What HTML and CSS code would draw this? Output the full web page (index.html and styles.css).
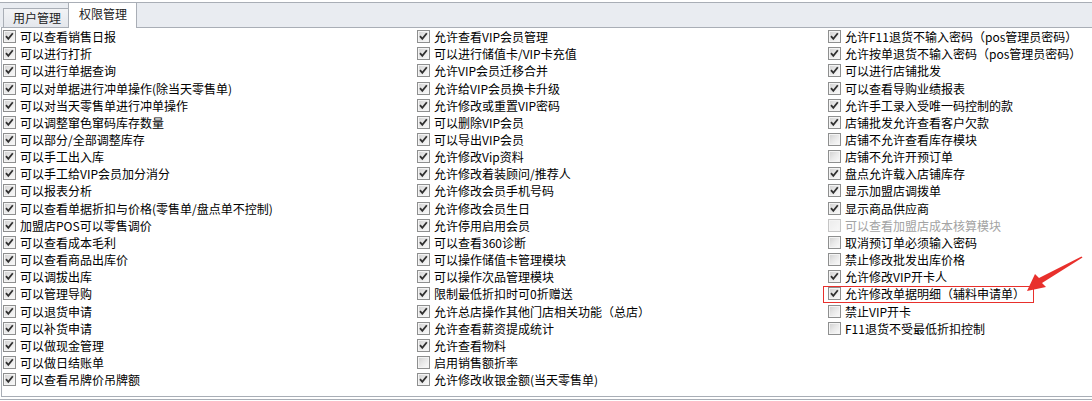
FILE: index.html
```html
<!DOCTYPE html>
<html lang="zh-CN">
<head>
<meta charset="utf-8">
<title>权限管理</title>
<link rel="stylesheet" href="styles.css">
</head>
<body>
<div class="tabstrip">
  <div class="tab">用户管理</div>
  <div class="tab active">权限管理</div>
</div>
<div class="panel">
  <div class="col">
    <div class="row"><span class="cb on"></span><span class="lbl">可以查看销售日报</span></div>
    <div class="row"><span class="cb on"></span><span class="lbl">可以进行打折</span></div>
    <div class="row"><span class="cb on"></span><span class="lbl">可以进行单据查询</span></div>
    <div class="row"><span class="cb on"></span><span class="lbl">可以对单据进行冲单操作(除当天零售单)</span></div>
    <div class="row"><span class="cb on"></span><span class="lbl">可以对当天零售单进行冲单操作</span></div>
    <div class="row"><span class="cb on"></span><span class="lbl">可以调整窜色窜码库存数量</span></div>
    <div class="row"><span class="cb on"></span><span class="lbl">可以部分/全部调整库存</span></div>
    <div class="row"><span class="cb on"></span><span class="lbl">可以手工出入库</span></div>
    <div class="row"><span class="cb on"></span><span class="lbl">可以手工给VIP会员加分消分</span></div>
    <div class="row"><span class="cb on"></span><span class="lbl">可以报表分析</span></div>
    <div class="row"><span class="cb on"></span><span class="lbl">可以查看单据折扣与价格(零售单/盘点单不控制)</span></div>
    <div class="row"><span class="cb on"></span><span class="lbl">加盟店POS可以零售调价</span></div>
    <div class="row"><span class="cb on"></span><span class="lbl">可以查看成本毛利</span></div>
    <div class="row"><span class="cb on"></span><span class="lbl">可以查看商品出库价</span></div>
    <div class="row"><span class="cb on"></span><span class="lbl">可以调拔出库</span></div>
    <div class="row"><span class="cb on"></span><span class="lbl">可以管理导购</span></div>
    <div class="row"><span class="cb on"></span><span class="lbl">可以退货申请</span></div>
    <div class="row"><span class="cb on"></span><span class="lbl">可以补货申请</span></div>
    <div class="row"><span class="cb on"></span><span class="lbl">可以做现金管理</span></div>
    <div class="row"><span class="cb on"></span><span class="lbl">可以做日结账单</span></div>
    <div class="row"><span class="cb on"></span><span class="lbl">可以查看吊牌价吊牌额</span></div>
  </div>
  <div class="col">
    <div class="row"><span class="cb on"></span><span class="lbl">允许查看VIP会员管理</span></div>
    <div class="row"><span class="cb on"></span><span class="lbl">可以进行储值卡/VIP卡充值</span></div>
    <div class="row"><span class="cb on"></span><span class="lbl">允许VIP会员迁移合并</span></div>
    <div class="row"><span class="cb on"></span><span class="lbl">允许给VIP会员换卡升级</span></div>
    <div class="row"><span class="cb on"></span><span class="lbl">允许修改或重置VIP密码</span></div>
    <div class="row"><span class="cb on"></span><span class="lbl">可以删除VIP会员</span></div>
    <div class="row"><span class="cb on"></span><span class="lbl">可以导出VIP会员</span></div>
    <div class="row"><span class="cb on"></span><span class="lbl">允许修改Vip资料</span></div>
    <div class="row"><span class="cb on"></span><span class="lbl">允许修改着装顾问/推荐人</span></div>
    <div class="row"><span class="cb on"></span><span class="lbl">允许修改会员手机号码</span></div>
    <div class="row"><span class="cb on"></span><span class="lbl">允许修改会员生日</span></div>
    <div class="row"><span class="cb on"></span><span class="lbl">允许停用启用会员</span></div>
    <div class="row"><span class="cb on"></span><span class="lbl">可以查看360诊断</span></div>
    <div class="row"><span class="cb on"></span><span class="lbl">可以操作储值卡管理模块</span></div>
    <div class="row"><span class="cb on"></span><span class="lbl">可以操作次品管理模块</span></div>
    <div class="row"><span class="cb on"></span><span class="lbl">限制最低折扣时可0折赠送</span></div>
    <div class="row"><span class="cb on"></span><span class="lbl">允许总店操作其他门店相关功能（总店）</span></div>
    <div class="row"><span class="cb on"></span><span class="lbl">允许查看薪资提成统计</span></div>
    <div class="row"><span class="cb on"></span><span class="lbl">允许查看物料</span></div>
    <div class="row"><span class="cb"></span><span class="lbl">启用销售额折率</span></div>
    <div class="row"><span class="cb on"></span><span class="lbl">允许修改收银金额(当天零售单)</span></div>
  </div>
  <div class="col">
    <div class="row"><span class="cb on"></span><span class="lbl">允许F11退货不输入密码（pos管理员密码）</span></div>
    <div class="row"><span class="cb on"></span><span class="lbl">允许按单退货不输入密码（pos管理员密码）</span></div>
    <div class="row"><span class="cb on"></span><span class="lbl">可以进行店铺批发</span></div>
    <div class="row"><span class="cb on"></span><span class="lbl">可以查看导购业绩报表</span></div>
    <div class="row"><span class="cb on"></span><span class="lbl">允许手工录入受唯一码控制的款</span></div>
    <div class="row"><span class="cb on"></span><span class="lbl">店铺批发允许查看客户欠款</span></div>
    <div class="row"><span class="cb"></span><span class="lbl">店铺不允许查看库存模块</span></div>
    <div class="row"><span class="cb"></span><span class="lbl">店铺不允许开预订单</span></div>
    <div class="row"><span class="cb on"></span><span class="lbl">盘点允许载入店铺库存</span></div>
    <div class="row"><span class="cb on"></span><span class="lbl">显示加盟店调拨单</span></div>
    <div class="row"><span class="cb on"></span><span class="lbl">显示商品供应商</span></div>
    <div class="row disabled"><span class="cb"></span><span class="lbl">可以查看加盟店成本核算模块</span></div>
    <div class="row"><span class="cb"></span><span class="lbl">取消预订单必须输入密码</span></div>
    <div class="row"><span class="cb"></span><span class="lbl">禁止修改批发出库价格</span></div>
    <div class="row"><span class="cb on"></span><span class="lbl">允许修改VIP开卡人</span></div>
    <div class="row"><span class="cb on"></span><span class="lbl">允许修改单据明细（辅料申请单）</span></div>
    <div class="row"><span class="cb"></span><span class="lbl">禁止VIP开卡</span></div>
    <div class="row"><span class="cb"></span><span class="lbl">F11退货不受最低折扣控制</span></div>
  </div>
</div>
<div class="footer"></div>

<div class="mark-box"></div>
<svg class="mark-arrow" width="72" height="50" viewBox="0 0 72 50">
  <polygon points="7,41 26,37 22,33 62.5,7.5 61.5,6.5 19,28 15,24" fill="#e8302c"/>
</svg>
</body>
</html>
```

FILE: styles.css
```css
html, body {
  margin: 0;
  padding: 0;
}
body {
  width: 1092px;
  height: 401px;
  overflow: hidden;
  background: #ffffff;
  position: relative;
  font-family: "Noto Sans CJK SC", "Microsoft YaHei", sans-serif;
  font-size: 12px;
  color: #000;
}

.tabstrip {
  margin-top: 2px;
  height: 24px;
  border-top: 1px solid #a9aeb6;
  background: #e9ecf1;
  display: flex;
  align-items: flex-end;
  padding-left: 3px;
}
.tab {
  box-sizing: border-box;
  height: 19px;
  line-height: 17px;
  padding: 0 7px 0 9px;
  border-left: 1px solid #a9aeb6;
  border-top: 1px solid #a9aeb6;
  background: linear-gradient(#f2f3f5, #e4e7ec);
  color: #222;
}
.tab.active {
  height: 26px;
  margin-bottom: -1px;
  padding: 0 9px 0 10px;
  line-height: 22px;
  border-right: 1px solid #a9aeb6;
  background: #ffffff;
  position: relative;
  z-index: 1;
}

.panel {
  box-sizing: border-box;
  height: 370px;
  margin-left: 1px;
  border-left: 1px solid #a9aeb6;
  border-top: 1px solid #a9aeb6;
  border-bottom: 1px solid #a9aeb6;
  background: #fff;
  display: grid;
  grid-template-columns: 414px 411px 1fr;
  padding-left: 1px;
}
.col {
  display: flex;
  flex-direction: column;
}
.row {
  height: 17.17px;
  display: flex;
  align-items: center;
  gap: 4px;
  white-space: nowrap;
}
.lbl {
  line-height: 17px;
}

.cb {
  box-sizing: border-box;
  width: 13px;
  height: 13px;
  flex: none;
  border: 1px solid #8e8f8f;
  box-shadow: inset 0 0 0 1px #f4f4f4;
  background: linear-gradient(135deg, #cfcfcf 0%, #e9e9e9 50%, #fbfbfb 100%);
  position: relative;
}
.cb.on {
  background-image:
    url("data:image/svg+xml;utf8,<svg xmlns='http://www.w3.org/2000/svg' width='11' height='11' viewBox='0 0 11 11'><path d='M2 5.2 L4.3 7.8 L8.8 2.2' fill='none' stroke='%23313131' stroke-width='1.8'/></svg>"),
    linear-gradient(135deg, #cfcfcf 0%, #e9e9e9 50%, #fbfbfb 100%);
  background-repeat: no-repeat;
  background-position: center;
}
.row.disabled .cb {
  border-color: #c5c5c5;
  background: linear-gradient(135deg, #ececec, #f8f8f8);
}
.row.disabled .lbl {
  color: #a3a3a3;
}

.footer {
  margin-top: 2px;
  height: 1px;
  border-top: 1px solid #a9aeb6;
}

.mark-box {
  position: absolute;
  left: 823px;
  top: 286px;
  width: 209px;
  height: 15px;
  border: 1px solid #e8302c;
}
.mark-arrow {
  position: absolute;
  left: 1020px;
  top: 250px;
}
```
